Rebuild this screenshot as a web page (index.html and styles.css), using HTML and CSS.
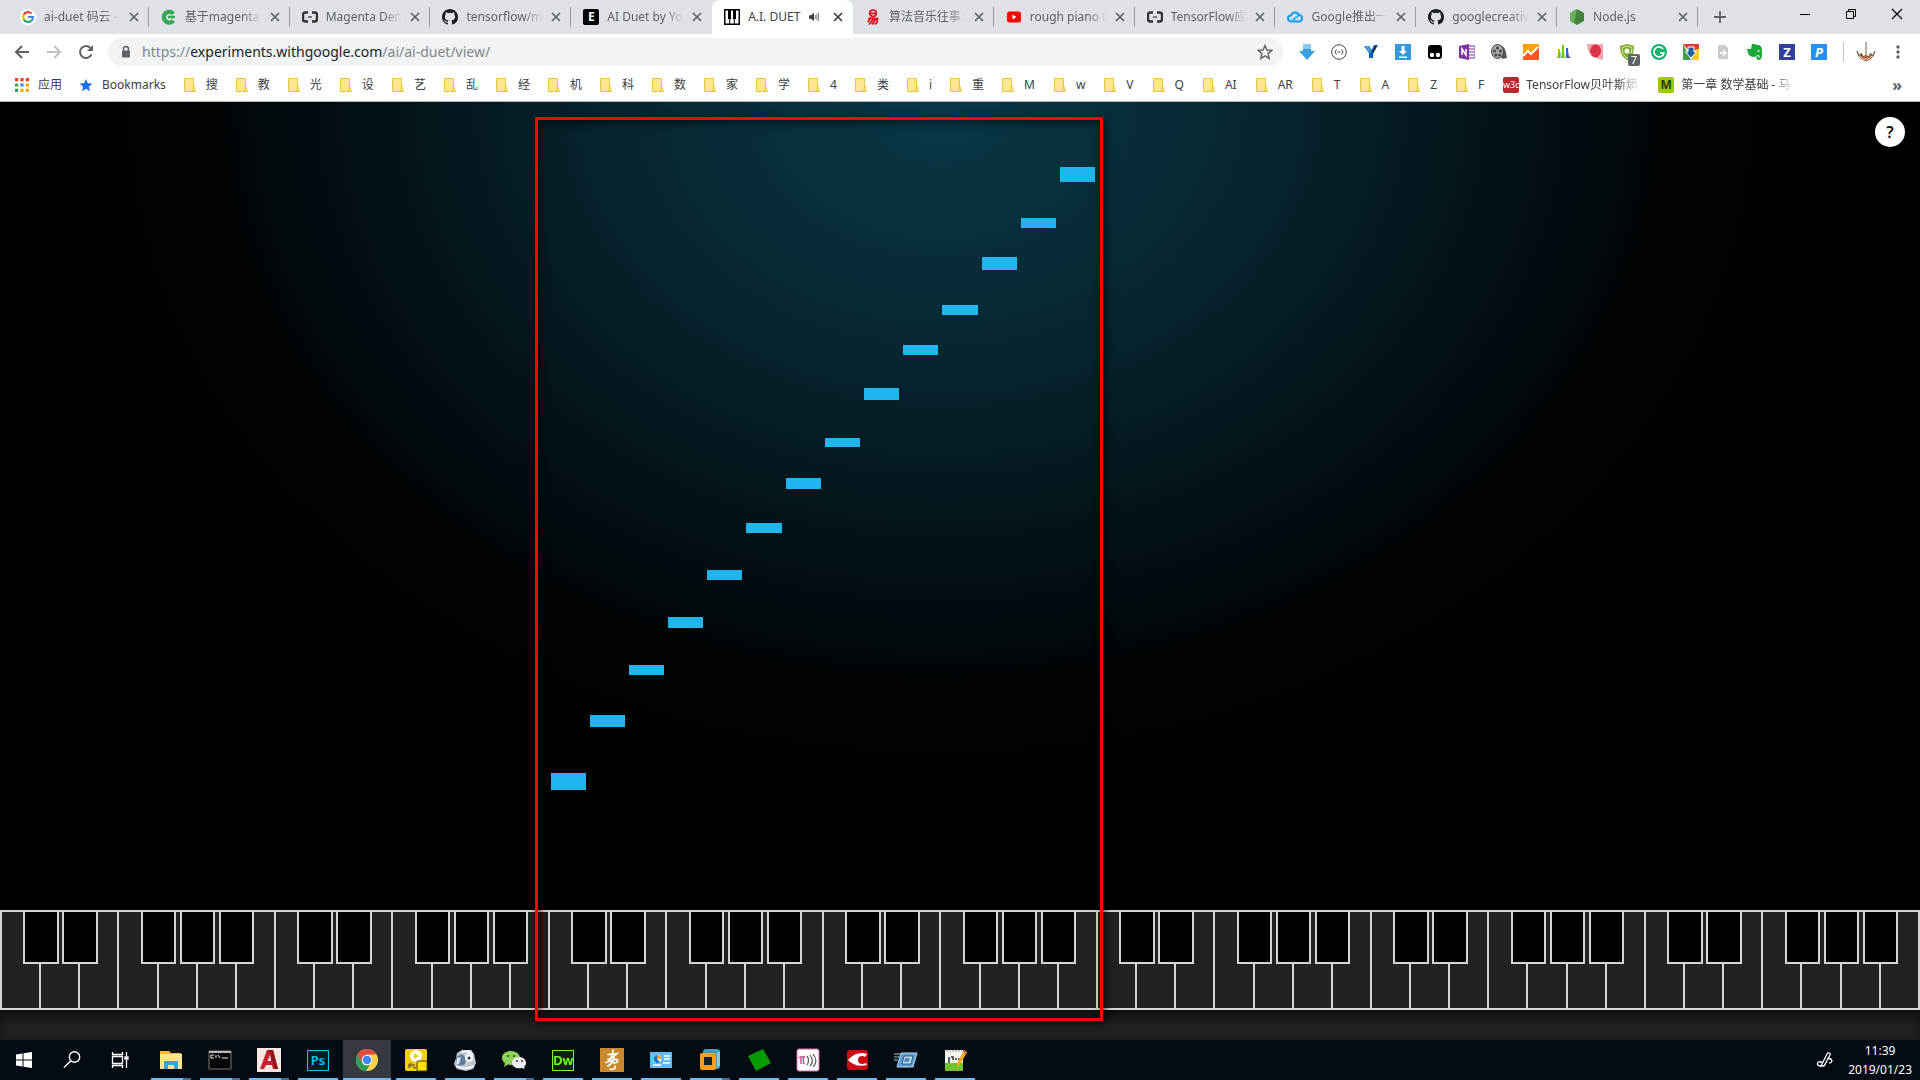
FILE: index.html
```
<!DOCTYPE html>
<html lang="zh-CN">
<head>
<meta charset="utf-8">
<title>A.I. DUET</title>
<link rel="stylesheet" href="styles.css">
</head>
<body>
<svg class="defs" aria-hidden="true">
  <symbol id="close" viewBox="0 0 10 10"><path d="M1 1l8 8M9 1l-8 8" fill="none" stroke="currentColor" stroke-width="1.7"/></symbol>
  <symbol id="github" viewBox="0 0 16 16"><path fill="#1b1f23" d="M8 0C3.58 0 0 3.58 0 8c0 3.54 2.29 6.53 5.47 7.59.4.07.55-.17.55-.38 0-.19-.01-.82-.01-1.49-2.01.37-2.53-.49-2.69-.94-.09-.23-.48-.94-.82-1.13-.28-.15-.68-.52-.01-.53.63-.01 1.08.58 1.23.82.72 1.21 1.87.87 2.33.66.07-.52.28-.87.51-1.07-1.78-.2-3.64-.89-3.64-3.95 0-.87.31-1.59.82-2.15-.08-.2-.36-1.02.08-2.12 0 0 .67-.21 2.2.82a7.6 7.6 0 014 0c1.53-1.04 2.2-.82 2.2-.82.44 1.1.16 1.92.08 2.12.51.56.82 1.27.82 2.15 0 3.07-1.87 3.75-3.65 3.95.29.25.54.73.54 1.48 0 1.07-.01 1.93-.01 2.2 0 .21.15.46.55.38A8.01 8.01 0 0016 8c0-4.42-3.58-8-8-8z"/></symbol>
  <symbol id="aliyun" viewBox="0 0 16 16"><path d="M6 3.5H3.2A2.2 2.2 0 001 5.700v4.600a2.200 2.200 0 002.200 2.200H6M10 3.500h2.800A2.200 2.200 0 0115 5.700v4.600a2.200 2.200 0 01-2.200 2.200H10" fill="none" stroke="#333" stroke-width="2.400"/><path d="M6 8h4" stroke="#555" stroke-width="1.500"/></symbol>
  <symbol id="folder" viewBox="0 0 12 14"><path d="M.5.500h9v6.500l2 6.500H.500z" fill="#ffe690" stroke="#e8c63e"/><path d="M9.500 5v5l-1.500 3.500" fill="none" stroke="#e8c63e"/></symbol>
</svg>

<header class="browser">
  <nav class="tabs" aria-label="标签页">
    <div class="tab"><svg class="fav" viewBox="0 0 16 16"><circle cx="8" cy="8" r="8" fill="#fff"/><path d="M11.500 4.400A5 5 0 003.600 5.700" fill="none" stroke="#ea4335" stroke-width="2.200"/><path d="M3.600 5.700a5 5 0 000 4.600" fill="none" stroke="#fbbc05" stroke-width="2.200"/><path d="M3.600 10.300a5 5 0 007.700 1.500" fill="none" stroke="#34a853" stroke-width="2.200"/><path d="M8 8h5a5 5 0 01-1.700 3.800" fill="none" stroke="#4285f4" stroke-width="2.200"/></svg><span class="title">ai-duet 码云 -</span><button class="x" aria-label="关闭"><svg><use href="#close"/></svg></button></div>
    <div class="tab"><svg class="fav" viewBox="0 0 16 16"><path d="M14 3.500A7.500 7.500 0 1014 13l-3-2.500a3.500 3.500 0 01-6-2.500A3.500 3.500 0 0111 6z" fill="#34a853"/><path d="M7 8h7" stroke="#34a853" stroke-width="2.500"/></svg><span class="title">基于magenta</span><button class="x" aria-label="关闭"><svg><use href="#close"/></svg></button></div>
    <div class="tab"><svg class="fav"><use href="#aliyun"/></svg><span class="title">Magenta Dem</span><button class="x" aria-label="关闭"><svg><use href="#close"/></svg></button></div>
    <div class="tab"><svg class="fav"><use href="#github"/></svg><span class="title">tensorflow/m</span><button class="x" aria-label="关闭"><svg><use href="#close"/></svg></button></div>
    <div class="tab"><span class="fav letter black">E</span><span class="title">AI Duet by Yo</span><button class="x" aria-label="关闭"><svg><use href="#close"/></svg></button></div>
    <div class="tab active"><svg class="fav" viewBox="0 0 16 16"><path d="M0 0h16v16H0z"/><path d="M1.500 1.500H4V10h1.200v4.500H1.500zM6.200 14.500V10H7V1.500h2V10h.8v4.500zM10.800 14.500V10H12V1.500h2.500v13z" fill="#fff"/></svg><span class="title">A.I. DUET</span><svg class="sound" viewBox="0 0 12 12"><path d="M0 4h2.500L6 1v10L2.500 8H0z" fill="currentColor"/><path d="M7.500 3.500v5M9.500 2v8M11.500 1v10" stroke="currentColor" stroke-width=".8"/></svg><button class="x" aria-label="关闭"><svg><use href="#close"/></svg></button></div>
    <div class="tab"><svg class="fav" viewBox="0 0 16 16"><g fill="none" stroke="#e60012" stroke-width="1.700"><circle cx="8" cy="4.300" r="3.300"/><path d="M5.500 4.300h5M3 9.500h9.500c0 3-1 5.500-3 5.500M6 8.500L3 13M8.500 10L4 15.500M11 10l-4 5.500"/></g></svg><span class="title">算法音乐往事：</span><button class="x" aria-label="关闭"><svg><use href="#close"/></svg></button></div>
    <div class="tab"><svg class="fav" viewBox="0 0 16 16"><rect x="1" y="2.500" width="14" height="11" rx="2.500" fill="red"/><path d="M6.500 5.500v5l4-2.500z" fill="#fff"/></svg><span class="title">rough piano t</span><button class="x" aria-label="关闭"><svg><use href="#close"/></svg></button></div>
    <div class="tab"><svg class="fav"><use href="#aliyun"/></svg><span class="title">TensorFlow应</span><button class="x" aria-label="关闭"><svg><use href="#close"/></svg></button></div>
    <div class="tab"><svg class="fav" viewBox="0 0 16 16"><path d="M4 12.500a3 3 0 010-6A4.300 4.300 0 0112 6a3.300 3.300 0 01.5 6.500zl7.500-6" fill="none" stroke="#0a9bf5" stroke-width="1.900"/><path d="M4.500 12.500L11 7" stroke="#35c3f5" stroke-width="1.900"/></svg><span class="title">Google推出一</span><button class="x" aria-label="关闭"><svg><use href="#close"/></svg></button></div>
    <div class="tab"><svg class="fav"><use href="#github"/></svg><span class="title">googlecreativ</span><button class="x" aria-label="关闭"><svg><use href="#close"/></svg></button></div>
    <div class="tab"><svg class="fav" viewBox="0 0 16 16"><path d="M8 0l7 4v8l-7 4-7-4V4z" fill="#43853d"/><path d="M8 0L1 4v8l4 2.300z" fill="#6cb055"/></svg><span class="title">Node.js</span><button class="x" aria-label="关闭"><svg><use href="#close"/></svg></button></div>
    <div class="strip-end">
      <button class="icon-btn" aria-label="新标签页"><svg viewBox="0 0 14 14" width="14" height="14"><path d="M7 1v12M1 7h12" stroke="#5f6368" stroke-width="1.800"/></svg></button>
      <div class="window-controls">
        <button aria-label="最小化"><svg viewBox="0 0 12 12"><path d="M1 6.500h10" stroke="#000"/></svg></button>
        <button aria-label="还原"><svg viewBox="0 0 12 12"><path d="M1.500 3.500h7v7h-7zM3.500 3V1.500h7v7H9" fill="none" stroke="#000"/></svg></button>
        <button aria-label="关闭窗口"><svg viewBox="0 0 12 12"><path d="M1 1l10 10M11 1L1 11" stroke="#000" stroke-width="1.200"/></svg></button>
      </div>
    </div>
  </nav>

  <div class="toolbar">
    <div class="nav-buttons">
      <button class="icon-btn" aria-label="后退"><svg viewBox="0 0 16 16"><path d="M15 8H2M8 2L2 8l6 6" fill="none" stroke="#5f6368" stroke-width="2"/></svg></button>
      <button class="icon-btn" aria-label="前进"><svg viewBox="0 0 16 16"><path d="M1 8h13M8 2l6 6-6 6" fill="none" stroke="#bfc2c5" stroke-width="2"/></svg></button>
      <button class="icon-btn" aria-label="重新加载"><svg viewBox="0 0 16 16"><path d="M13.500 10.500A6 6 0 1112.500 4" fill="none" stroke="#5f6368" stroke-width="2"/><path d="M15 1v6H9z" fill="#5f6368"/></svg></button>
    </div>
    <div class="omnibox">
      <svg class="lock" viewBox="0 0 10 14"><path d="M2.500 6V4a2.500 2.500 0 015 0v2" fill="none" stroke="#5f6368" stroke-width="1.500"/><rect x="1" y="5.500" width="8" height="7" rx="1" fill="#5f6368"/></svg>
      <span class="url">https://<b>experiments.withgoogle.com</b>/ai/ai-duet/view/</span>
      <button class="icon-btn" aria-label="添加书签"><svg viewBox="0 0 16 16"><path d="M8 1.500l1.900 4.500 4.900.400-3.700 3.200 1.100 4.800L8 11.800l-4.200 2.600 1.100-4.800L1.200 6.400 6.100 6z" fill="none" stroke="#5f6368" stroke-width="1.400"/></svg></button>
    </div>
    <div class="extensions">
      <svg viewBox="0 0 16 16"><path d="M4 0h8v7h4l-8 9-8-9h4z" fill="#3aa0dc"/><path d="M4 0h8v5H4z" fill="#8bc8ed"/></svg>
      <svg viewBox="0 0 16 16"><circle cx="8" cy="8" r="7.300" fill="#fff" stroke="#444"/><path d="M5.500 5.500L4 8l1.500 2.500M10.500 5.500L12 8l-1.500 2.500M6.500 8h3" fill="none" stroke="#444"/></svg>
      <svg viewBox="0 0 16 16"><path d="M1 2h5l2.500 4L11 1h4l-4.500 8L10 14H6V9z" fill="#1363b4"/><path d="M2 2h3l3 5-1 2z" fill="#52a9e9"/><path d="M9 8l3-6h2l-4 7z" fill="#09264f"/></svg>
      <svg viewBox="0 0 16 16"><path d="M0 0h16v16H0z" fill="#3498db"/><path d="M6.500 2h3v5H12l-4 4-4-4h2.500zM4 12.500h8V14H4z" fill="#fff"/></svg>
      <svg viewBox="0 0 16 16"><path d="M1 4a3 3 0 013-3h8a3 3 0 013 3v8a3 3 0 01-3 3H4a3 3 0 01-3-3z"/><circle cx="5" cy="11" r="2.200" fill="#fff"/><circle cx="11" cy="11" r="2.200" fill="#fff"/></svg>
      <svg viewBox="0 0 16 16"><path d="M9 2h7v12H9z" fill="#fff" stroke="#7b2fa5"/><path d="M10 5h5M10 8h5M10 11h5" stroke="#7b2fa5"/><path d="M0 2l10-2v16L0 14z" fill="#80329f"/><path d="M3 11V5l4 6V5" fill="none" stroke="#fff" stroke-width="1.500"/></svg>
      <svg viewBox="0 0 16 16"><path d="M7 1c5 0 7 3 8 8l1 5-5 1z" fill="#555"/><ellipse cx="6.500" cy="7.500" rx="6" ry="7" fill="#aaa" stroke="#444"/><g fill="#444"><circle cx="6.500" cy="4" r="1.500"/><circle cx="3.500" cy="7" r="1.500"/><circle cx="9.500" cy="7" r="1.500"/><circle cx="4.800" cy="11" r="1.500"/><circle cx="8.500" cy="11" r="1.500"/></g></svg>
      <svg viewBox="0 0 16 16"><path d="M0 0h16v16H0z" fill="#ffa000"/><path d="M0 12l5-5 3 3 8-7v13H0z" fill="#ff5722"/><path d="M0 12l5-5 3 3 7-7" fill="none" stroke="#fff" stroke-width="2"/></svg>
      <svg viewBox="0 0 16 16"><path d="M1 14c2-1 2-4 2-9h2v9z" fill="#a5c61d"/><path d="M6 14c1-3 1-8 1-13h2c0 5 0 10 1 13z" fill="#6cc800"/><path d="M11 14V4h2c0 6 1 9 3 10z" fill="#475eb8"/><path d="M5 14V8" stroke="#3c7bd0"/></svg>
      <svg viewBox="0 0 16 16"><path d="M0 0h16v16C4 14 0 8 0 0z" fill="#f3a4ac"/><ellipse cx="8.500" cy="7" rx="5.500" ry="6.500" fill="#dc3545"/></svg>
      <span class="badged"><svg viewBox="0 0 16 16"><path d="M8 0l7 2c0 7-2 11-7 14C3 13 1 9 1 2z" fill="#7aaa23"/><path d="M8 2l5 1.500c0 5-1.500 8-5 10.500-3.500-2.500-5-5.500-5-10.500z" fill="none" stroke="#dcecc0"/><circle cx="8" cy="7" r="2.500" fill="#fff"/></svg><span class="badge">7</span></span>
      <svg viewBox="0 0 16 16"><circle cx="8" cy="8" r="8" fill="#15b371"/><path d="M12 5a5 5 0 10.800 4H9M12.800 9l-1 3" fill="none" stroke="#fff" stroke-width="1.700"/></svg>
      <svg viewBox="0 0 16 16"><path d="M0 0h16v6H5z" fill="#e53a2e"/><path d="M0 0l8 16H0z" fill="#43a047"/><path d="M16 5v11H8l5-11z" fill="#ffc914"/><path d="M5 3h6v5h2.500L8 14 2.500 8H5z" fill="#1e5f9d" stroke="#fff"/></svg>
      <svg viewBox="0 0 16 16"><path d="M3 1h7l3 3v11H3z" fill="#ccc"/><path d="M5 9h5M8 6.500l3 2.500-3 2.500" fill="none" stroke="#fff" stroke-width="1.500"/></svg>
      <svg viewBox="0 0 16 16"><path d="M5 0c2-1 4 1 6 1 4 0 4 4 4 8 0 5-1 7-3 7-3 0-4-4-1-4l1 2c2-2-1-4-3-2-1 2-7 1-8-3L0 5h4z" fill="#1aa838"/><circle cx="11.500" cy="7" r="1" fill="#fff"/></svg>
      <span class="ext-letter navy">Z</span>
      <span class="ext-letter blue">P</span>
    </div>
    <div class="profile">
      <svg viewBox="0 0 20 20"><path d="M10 0v14" stroke="#999" stroke-width="1.500"/><path d="M1 9l2 5M19 9l-2 5M5 11l1 4M15 11l-1 4" stroke="#8d6f5c" stroke-width="1.500"/><path d="M2 13l3-1 2 2 3-1 3 1 2-2 3 1-3 4-4 2H9l-4-2z" fill="#a7623c"/><path d="M4 14l3 3h6l3-3" fill="none" stroke="#e5d8c8"/><circle cx="6" cy="13" r="1" fill="#546c45"/><circle cx="14" cy="13" r="1" fill="#546c45"/></svg>
    </div>
    <button class="icon-btn" aria-label="菜单"><svg viewBox="0 0 16 16" fill="#5f6368"><circle cx="8" cy="3" r="1.700"/><circle cx="8" cy="8" r="1.700"/><circle cx="8" cy="13" r="1.700"/></svg></button>
  </div>

  <nav class="bookmarks" aria-label="书签栏">
    <a href="#"><svg viewBox="0 0 13 13"><path d="M0 0h3v3H0zM5 0h3v3H5zM10 0h3v3h-3z" fill="#ea4335"/><path d="M0 5h3v3H0zM0 10h3v3H0z" fill="#34a853"/><path d="M5 5h3v3H5z" fill="#4285f4"/><path d="M10 5h3v3h-3zM5 10h3v3H5zM10 10h3v3h-3z" fill="#fbab05"/></svg>应用</a>
    <a href="#"><svg viewBox="0 0 16 16"><path d="M8 1l2.100 5 5.300.400-4 3.500 1.200 5.200L8 12.300l-4.600 2.800 1.200-5.200-4-3.500L5.900 6z" fill="#1a73e8"/></svg>Bookmarks</a>
    <a href="#"><svg><use href="#folder"/></svg>搜</a>
    <a href="#"><svg><use href="#folder"/></svg>教</a>
    <a href="#"><svg><use href="#folder"/></svg>光</a>
    <a href="#"><svg><use href="#folder"/></svg>设</a>
    <a href="#"><svg><use href="#folder"/></svg>艺</a>
    <a href="#"><svg><use href="#folder"/></svg>乱</a>
    <a href="#"><svg><use href="#folder"/></svg>经</a>
    <a href="#"><svg><use href="#folder"/></svg>机</a>
    <a href="#"><svg><use href="#folder"/></svg>科</a>
    <a href="#"><svg><use href="#folder"/></svg>数</a>
    <a href="#"><svg><use href="#folder"/></svg>家</a>
    <a href="#"><svg><use href="#folder"/></svg>学</a>
    <a href="#"><svg><use href="#folder"/></svg>4</a>
    <a href="#"><svg><use href="#folder"/></svg>类</a>
    <a href="#"><svg><use href="#folder"/></svg>i</a>
    <a href="#"><svg><use href="#folder"/></svg>重</a>
    <a href="#" class="latin"><svg><use href="#folder"/></svg>M</a>
    <a href="#" class="latin"><svg><use href="#folder"/></svg>w</a>
    <a href="#" class="latin"><svg><use href="#folder"/></svg>V</a>
    <a href="#" class="latin"><svg><use href="#folder"/></svg>Q</a>
    <a href="#" class="latin"><svg><use href="#folder"/></svg>AI</a>
    <a href="#" class="latin"><svg><use href="#folder"/></svg>AR</a>
    <a href="#" class="latin"><svg><use href="#folder"/></svg>T</a>
    <a href="#" class="latin"><svg><use href="#folder"/></svg>A</a>
    <a href="#" class="latin"><svg><use href="#folder"/></svg>Z</a>
    <a href="#" class="latin"><svg><use href="#folder"/></svg>F</a>
    <a href="#" class="long"><span class="letter w3c">w3c</span><span class="clip">TensorFlow贝叶斯熵</span></a>
    <a href="#" class="long"><span class="letter lime">M</span><span class="clip">第一章 数学基础 - 马</span></a>
    <button class="more" aria-label="更多书签">»</button>
  </nav>
</header>

<main class="stage">
  <div class="roll" id="roll"></div>
  <div class="keyboard" id="keyboard"></div>
  <div class="lip"></div>
  <button class="help">?</button>
  <div class="marker"></div>
</main>

<footer class="taskbar">
  <button aria-label="开始"><svg viewBox="0 0 24 24"><path d="M4 6.500l6.500-1v6H4zM11.500 5.300L20 4v7.500h-8.500zM4 12.500h6.500v6l-6.500-1zM11.500 12.500H20V20l-8.500-1.300z" fill="#fff"/></svg></button>
  <button aria-label="搜索"><svg viewBox="0 0 24 24"><circle cx="13.500" cy="9" r="5.200" fill="none" stroke="#fff" stroke-width="1.400"/><path d="M9.800 12.800L3 19.500" stroke="#fff" stroke-width="1.500"/></svg></button>
  <button aria-label="任务视图"><svg viewBox="0 0 24 24" fill="none" stroke="#fff" stroke-width="1.300"><path d="M2.500 8.500h10v7h-10zM2.500 4v2.500h10V4M2.500 20v-2.500h10V20M16.500 4v4M16.500 12v8"/><path d="M15 9h3v2h-3z" fill="#fff"/></svg></button>
  <button class="open many" aria-label="文件资源管理器"><svg viewBox="0 0 24 24"><path d="M1 3h9l2 2h10v16H1z" fill="#f4b824"/><path d="M1 6h22v15H1z" fill="#ffe591"/><path d="M5 21v-8h14v8h-4v-4H9v4z" fill="#35a5e5"/></svg></button>
  <button class="open many" aria-label="命令提示符"><svg viewBox="0 0 24 24"><path d="M1 3h22v18H1z" fill="#050505" stroke="#777"/><path d="M1 3h22v2H1z" fill="#bbb"/><path d="M6 7H3v3h3M8 7v3M10 7l2 3M14 10h6" stroke="#eee" fill="none"/></svg></button>
  <button class="open many" aria-label="AutoCAD"><svg viewBox="0 0 24 24"><path d="M0 0h24v24H0z" fill="#fbe6e2"/><path d="M3 21L10 2h6l5 19h-5l-1-4H9l-2 4zM10.500 13H14l-1-6z" fill="#c42029"/><path d="M10 2h6l5 19h-3L13 5z" fill="#8e141b"/></svg></button>
  <button class="open"><span class="app ps">Ps</span></button>
  <button class="open current" aria-label="Chrome"><svg viewBox="0 0 24 24"><circle cx="12" cy="12" r="11" fill="#ffd04c"/><path d="M2.500 6.500A11 11 0 0121.500 6.500H12L7 15z" fill="#df4b40"/><path d="M2.500 6.500L7 14.500c1 2 3 3 5 3l3-1-4 6.500A11 11 0 012.500 6.500z" fill="#2a9d58"/><circle cx="12" cy="12" r="5.200" fill="#fff"/><circle cx="12" cy="12" r="4.200" fill="#4285f4"/></svg></button>
  <button class="open" aria-label="PotPlayer"><svg viewBox="0 0 24 24"><rect x="1" y="1" width="22" height="22" rx="2" fill="#f2ce13"/><circle cx="12" cy="8" r="6" fill="#fff"/><path d="M10 5v6l5-3z" fill="#f2ce13"/><path d="M5 20v-4h3v2H5M10 16v4h2" fill="none" stroke="#554600"/><rect x="13" y="13" width="10" height="10" rx="1" fill="#ffe000" stroke="#473d00"/></svg></button>
  <button class="open" aria-label="机器人"><svg viewBox="0 0 24 24"><path d="M4 5l5-3h9l3 4 2 9-3 6-7 2-9-2-3-5 2-6z" fill="#bec7ce"/><path d="M3 9l6-3 5 5-3 6-8 1z" fill="#637f9c"/><circle cx="16" cy="10" r="4" fill="#f3f6f8"/><circle cx="16" cy="10" r="1.500" fill="#333"/><path d="M8 4l9-1 2 3-5-1M3 18c6 3 12 3 18 0" stroke="#eef2f5" fill="none" stroke-width="2"/><path d="M4 10l4-1-2 7-3 1z" fill="#dfeaf4"/></svg></button>
  <button class="open many" aria-label="微信"><svg viewBox="0 0 24 24"><path d="M9 3c5 0 9 3 9 7s-4 7-9 7l-3-.500L2 19l1-4c-2-1-3-3-3-5 0-4 4-7 9-7z" fill="#8bd456"/><path d="M17 9c4 0 7 2.500 7 6 0 2-1 3-2 4l1 2-3-1c-5 1-10-1-10-5 0-3.500 3-6 7-6z" fill="#eee"/><g fill="#333"><circle cx="6" cy="8" r="1"/><circle cx="12" cy="8" r="1"/><circle cx="15" cy="13" r="1"/><circle cx="20" cy="13" r="1"/></g></svg></button>
  <button class="open"><span class="app dw">Dw</span></button>
  <button class="open" aria-label="书法"><svg viewBox="0 0 24 24"><path d="M0 0h24v24H0z" fill="#c9892f"/><path d="M8 6.500c3 0 6-1 9-1-2 2-5 5-9 6M13 2c0 3-1 7-4 11M6 14.500c4-1 8-4 11-3 2 2-1 4-4 3M14 10c-1 4-4 7-6 8M10 21c3 1 6 0 5-3" fill="none" stroke="#fff" stroke-width="1.700" stroke-linecap="round"/></svg></button>
  <button class="open" aria-label="控制面板"><svg viewBox="0 0 24 24"><path d="M1 4h22v16H1z" fill="#63bdf4"/><circle cx="8" cy="11" r="4" fill="#fff"/><path d="M8 11V7a4 4 0 014 4z" fill="#f6a12c"/><path d="M8 11V7a4 4 0 103 7z" fill="#1b78bd"/><path d="M15 8h6M15 11h6M14 15h7M4 17h8" stroke="#fff" stroke-width="1.500"/></svg></button>
  <button class="open many" aria-label="VMware"><svg viewBox="0 0 24 24"><rect x="5" y="1" width="17" height="20" rx="3" fill="#3f9fc2"/><path d="M19 4v16l3-3V4z" fill="#7fcae0"/><rect x="2" y="5" width="16" height="17" rx="2" fill="#f79e1d"/><rect x="6" y="9" width="8" height="8" fill="#10232c"/></svg></button>
  <button class="open" aria-label="绿色方块"><svg viewBox="0 0 24 24"><path d="M1 8l15-7 8 14-15 8z" fill="#049b04"/></svg></button>
  <button class="open" aria-label="公式"><svg viewBox="0 0 24 24"><rect x="1" y="1" width="22" height="22" rx="2" fill="#fff" stroke="#d96b9c"/><path d="M3 10c1-2 4-1 6-1M5 9v7M7.500 9c0 3-1 6 1 7" fill="none" stroke="#e0418f" stroke-width="1.400"/><path d="M11 8c2 2 2 6 0 9M14 7c3 4 3 8 0 11M17 6c4 5 4 9 0 13" fill="none" stroke="#555" stroke-width="1.200"/></svg></button>
  <button class="open" aria-label="红眼"><svg viewBox="0 0 24 24"><rect x="2" y="2" width="21" height="20" rx="3" fill="#c80d15"/><path d="M22 6C13 3 7 8 3 12c5 5 11 7 19 5l-1-2c-8 3-9-7-1-6z" fill="#fff"/><circle cx="17" cy="12" r="4" fill="#c80d15"/></svg></button>
  <button class="open" aria-label="运行"><svg viewBox="0 0 24 24"><path d="M7 5h16l-4 14H3z" fill="#5d9fd4" stroke="#b7dcf4"/><path d="M10 8h9l-2 8H8z" fill="#c5e0f2" stroke="#275681"/><path d="M11 10h5l-1 4h-5z" fill="#5589b5"/><path d="M0 6h6M0 9h5M0 12h4" stroke="#9dcbe8"/></svg></button>
  <button class="open" aria-label="Notepad++"><svg viewBox="0 0 24 24"><path d="M2 2h18v21H2z" fill="#f4f6ee"/><path d="M2 15h18v8H2z" fill="#72c42e"/><path d="M3 3h16" stroke="#999" stroke-dasharray="2 1"/><path d="M6 9v6M8 9h2v3M12 11h2M15 11h2" stroke="#333" stroke-width="1.500" fill="none"/><path d="M21 2l3 2-7 13-3 2v-4z" fill="#eda72e"/><path d="M21 2l3 2-1 2-3-2z" fill="#dd6b61"/></svg></button>
  <div class="tray">
    <svg viewBox="0 0 18 18"><path d="M5 15L11 3c1-2 4-1 3 1L8 15zM7 12C1 8-1 15 5 15M11 8c5-2 7 4 2 4" fill="none" stroke="#fff" stroke-width="1.300"/></svg>
    <div class="clock"><time>11:39</time><time>2019/01/23</time></div>
  </div>
</footer>
<script src="piano.js"></script>
</body>
</html>
```
FILE: styles.css
```
* { box-sizing: border-box; }
body {
  margin: 0;
  min-height: 100vh;
  display: flex;
  flex-direction: column;
  background: #000;
  color: #3c4043;
  font: 12px/16px "Noto Sans", "Noto Sans CJK SC", sans-serif;
}
button { border: 0; padding: 0; margin: 0; background: none; font: inherit; color: inherit; }
svg { display: block; flex: none; }
.defs { width: 0; height: 0; position: absolute; }
.icon-btn { display: flex; align-items: center; justify-content: center; width: 16px; height: 16px; flex: none; }
.icon-btn svg { width: 16px; height: 16px; }

.browser { background: #fff; border-bottom: 1px solid #b6b4b6; }
.tabs { display: flex; height: 34px; padding-left: 8px; background: #dee1e6; }
.tab {
  position: relative;
  flex: 1 1 0;
  min-width: 0;
  display: flex;
  align-items: center;
  gap: 8px;
  padding: 0 10px 0 12px;
  color: #5f6368;
}
.tab:not(.active)::after {
  content: "";
  position: absolute;
  right: 0;
  top: 7px;
  height: 20px;
  width: 1px;
  background: #9a9da1;
}
.tab:has(+ .active)::after { display: none; }
.tab.active { background: #fff; border-radius: 8px 8px 0 0; color: #3c4043; }
.fav { width: 16px; height: 16px; flex: none; }
.title {
  flex: 1;
  min-width: 0;
  overflow: hidden;
  white-space: nowrap;
  -webkit-mask-image: linear-gradient(to right, #000 75%, transparent);
  mask-image: linear-gradient(to right, #000 75%, transparent);
}
.active .title { -webkit-mask-image: none; mask-image: none; }
.sound { width: 10px; height: 10px; margin-right: 6px; }
.x { width: 10px; height: 10px; flex: none; }
.x svg { width: 10px; height: 10px; }
.letter { display: flex; align-items: center; justify-content: center; color: #fff; }
.letter.black { background: #000; border-radius: 2px; font-weight: 700; }
.strip-end { flex: none; width: 222px; display: flex; align-items: center; justify-content: space-between; padding: 0 17px 0 14px; }
.strip-end .icon-btn svg { width: 14px; height: 14px; }
.window-controls { display: flex; gap: 34px; padding-bottom: 6px; }
.window-controls svg { width: 12px; height: 12px; }

.toolbar { display: flex; align-items: center; height: 36px; padding: 0 14px; }
.nav-buttons { display: flex; gap: 16px; margin-right: 14px; }
.omnibox {
  flex: 1;
  display: flex;
  align-items: center;
  height: 28px;
  padding: 0 10px 0 13px;
  border-radius: 14px;
  background: #f1f3f4;
}
.lock { width: 10px; height: 14px; margin-right: 11px; }
.url { flex: 1; font-size: 14px; color: #80868b; white-space: nowrap; }
.url b { font-weight: 400; color: #202124; }
.extensions { display: flex; gap: 16px; padding: 0 16px; }
.extensions svg { width: 16px; height: 16px; }
.badged { position: relative; }
.badge {
  position: absolute;
  left: 9px;
  top: 10px;
  width: 12px;
  height: 12px;
  border-radius: 2px;
  background: #5f6368;
  color: #fff;
  font-size: 11px;
  line-height: 12px;
  text-align: center;
}
.ext-letter { width: 16px; height: 16px; color: #fff; font-weight: 700; font-size: 13px; text-align: center; }
.navy { background: #323f9c; }
.blue { background: #2590f5; font-style: italic; }
.profile { border-left: 1px solid #c3c5c8; padding: 0 14px 0 12px; }
.profile svg { width: 20px; height: 20px; }

.bookmarks { display: flex; align-items: center; gap: 16px; height: 31px; padding: 0 18px 2px 14px; }
.bookmarks a { display: flex; align-items: center; gap: 8px; color: inherit; text-decoration: none; white-space: nowrap; }
.bookmarks svg { width: 16px; height: 14px; }
.bookmarks .latin { padding-right: 1px; }
.bookmarks .long { gap: 7px; padding-left: 2px; }
.bookmarks .long .letter { width: 16px; height: 16px; border-radius: 2px; font-size: 9px; }
.bookmarks .letter.w3c { background: #b9262b; }
.bookmarks .letter.lime { background: #a0c800; color: #26420a; font-size: 12px; font-weight: 700; }
.clip {
  width: 114px;
  overflow: hidden;
  -webkit-mask-image: linear-gradient(to right, #000 80%, transparent);
  mask-image: linear-gradient(to right, #000 80%, transparent);
}
.more { margin-left: auto; font-size: 16px; font-weight: 700; color: #5f6368; }

.stage {
  position: relative;
  flex: 1;
  display: flex;
  flex-direction: column;
  background: radial-gradient(ellipse 44% 72% at 49% 0, #093747 0%, #072a35 30%, #04161c 60%, #010508 85%, #000 100%);
}
.roll { flex: 1; min-height: 300px; }
.note { position: absolute; width: calc(100% / 49 - 4px); background: #20b6ed; }
.keyboard {
  display: flex;
  height: 100px;
  border: solid #d6d5d6;
  border-width: 2px 2px 2px 0;
  background: #222;
}
.white { position: relative; flex: 1 1 0; border-left: 2px solid #d6d5d6; }
.black-key {
  position: absolute;
  z-index: 1;
  top: 0;
  left: calc(60% - 1px);
  width: calc(90% + 2px);
  height: 52px;
  border: 2px solid #d6d5d6;
  border-top: 0;
  background: #000;
}
.lip { height: 30px; background: #222; box-shadow: inset 0 12px 12px -4px #101010, inset 0 0 8px #181818; }
.help {
  position: absolute;
  right: 15px;
  top: 15px;
  width: 30px;
  height: 30px;
  border-radius: 50%;
  background: #fff;
  color: #111;
  font-size: 16px;
  font-weight: 600;
}
.marker {
  position: absolute;
  z-index: 2;
  inset: 15px 42.550% 19px 27.870%;
  border: 3px solid #f00;
  box-shadow: 2px 2px 8px #000a, inset 2px 2px 8px #000a;
  pointer-events: none;
}

.taskbar { display: flex; gap: 1px; height: 40px; background: #050b13; color: #fff; }
.taskbar button { position: relative; width: 48px; display: flex; align-items: center; justify-content: center; flex: none; }
.taskbar button svg { width: 24px; height: 24px; }
.taskbar .open::after {
  content: "";
  position: absolute;
  left: 4px;
  right: 4px;
  bottom: 0;
  height: 2px;
  background: #76b9ed;
}
.taskbar .many::after { background: linear-gradient(to right, #76b9ed 80%, #466f93 80%); }
.taskbar .current { background: #363a40; }
.taskbar .current::after { left: 0; right: 0; }
.app { width: 22px; height: 21px; border: 1px solid; font-size: 13px; line-height: 18px; font-weight: 600; text-align: center; }
.ps { color: #00c8ff; background: #001d26; }
.dw { color: #7dff1a; background: #072401; }
.tray { margin-left: auto; display: flex; align-items: center; gap: 14px; padding-right: 8px; }
.tray svg { width: 18px; height: 18px; }
.clock { display: flex; flex-direction: column; align-items: center; line-height: 19px; }
```
FILE: piano.js
```
// Octaves of seven white keys; a black key sits after each one marked true.
const blackAfter = [true, true, false, true, true, true, false];
const keyboard = document.getElementById("keyboard");
const keyCount = 49;
for (let i = 0; i < keyCount; i++) {
  const key = document.createElement("div");
  key.className = "white";
  if (blackAfter[i % 7]) {
    const black = document.createElement("div");
    black.className = "black-key";
    key.append(black);
  }
  keyboard.append(key);
}

// Notes as [white key index, top, height].
const notes = [
  [14, 671, 17], [15, 613, 12], [16, 563, 10], [17, 515, 11], [18, 468, 10],
  [19, 421, 10], [20, 376, 11], [21, 336, 9], [22, 286, 12], [23, 243, 10],
  [24, 203, 10], [25, 155, 13], [26, 116, 10], [27, 65, 15]
];
const roll = document.getElementById("roll");
for (const [index, top, height] of notes) {
  const note = document.createElement("div");
  note.className = "note";
  note.style.left = `calc(${index} * 100% / ${keyCount} + 2px)`;
  note.style.top = `${top}px`;
  note.style.height = `${height}px`;
  roll.append(note);
}
```
